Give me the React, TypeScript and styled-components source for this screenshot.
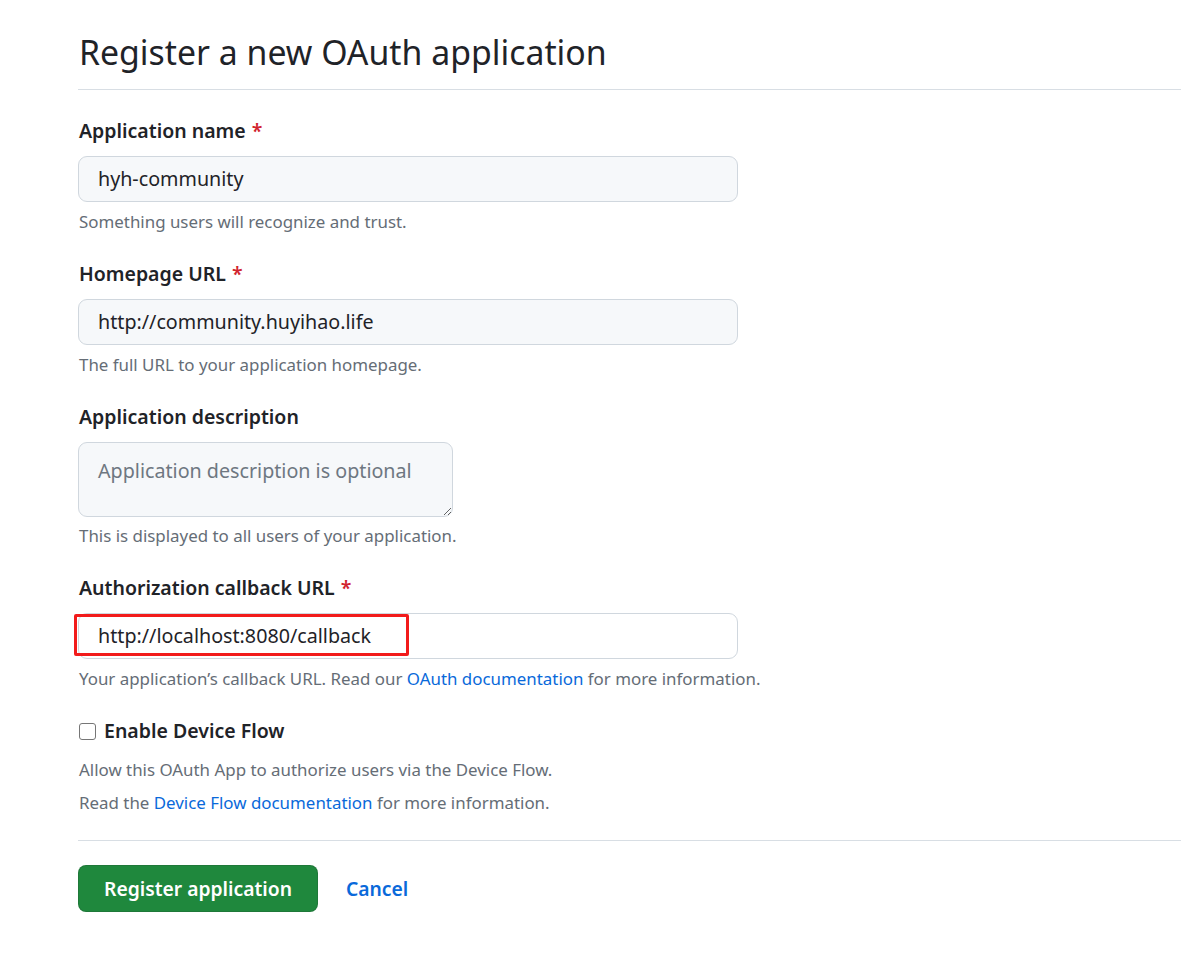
import React from "react";
import styled, { createGlobalStyle } from "styled-components";

const GlobalStyle = createGlobalStyle`
  html, body { margin: 0; padding: 0; background: #ffffff; }
  body {
    font-family: "Noto Sans", "Open Sans", "Liberation Sans", sans-serif;
    color: #1f2328;
  }
  * { box-sizing: border-box; }
`;

const Page = styled.main`
  padding: 28px 21px 40px 78px;
  width: 1202px;
`;

const Subhead = styled.header`
  border-bottom: 1px solid #d8dee4;
  padding-bottom: 13px;
  margin-bottom: 26px;
`;

const Title = styled.h2`
  margin: 0;
  font-size: 33.8px;
  line-height: 48px;
  font-weight: 400;
  color: #1f2328;
  padding-left: 1px;
`;

const Group = styled.div`
  margin-bottom: 25.5px;
`;

const Label = styled.label`
  display: block;
  font-size: 19.5px;
  line-height: 30px;
  font-weight: 600;
  color: #1f2328;
  margin-bottom: 9.5px;
  padding-left: 1px;
`;

const Required = styled.span`
  color: #d1242f;
  margin-left: 6px;
`;

const InputWrap = styled.div`
  position: relative;
  width: 660px;
`;

const Input = styled.input<{ $white?: boolean }>`
  display: block;
  width: 660px;
  height: 46px;
  padding: 0 19px;
  font-family: inherit;
  font-size: 19.7px;
  color: #1f2328;
  background: ${(p) => (p.$white ? "#ffffff" : "#f6f8fa")};
  border: 1px solid #d0d7de;
  border-radius: 9px;
  outline: none;
`;

const TextArea = styled.textarea`
  display: block;
  width: 375px;
  height: 75px;
  padding: 13px 19px;
  font-family: inherit;
  font-size: 19.7px;
  line-height: 30px;
  color: #1f2328;
  background: #f6f8fa;
  border: 1px solid #d0d7de;
  border-radius: 9px;
  outline: none;
  resize: both;
  &::placeholder { color: #6e7781; }
`;

const Annotation = styled.div`
  position: absolute;
  left: -4px;
  top: 1px;
  width: 335px;
  height: 42px;
  border: 3px solid #f21b1b;
  border-radius: 2px;
  pointer-events: none;
`;

const Hint = styled.p<{ $gap?: number }>`
  margin: ${(p) => p.$gap ?? 8}px 0 0;
  font-size: 16.9px;
  line-height: 24px;
  color: #656d76;
  padding-left: 1px;
`;

const Link = styled.a`
  color: #0969da;
  text-decoration: none;
`;

const CheckRow = styled.label`
  display: flex;
  align-items: center;
  gap: 8px;
  font-size: 19.5px;
  line-height: 30px;
  font-weight: 600;
  color: #1f2328;
  padding-left: 1px;
`;

const Check = styled.input`
  appearance: none;
  margin: 0;
  width: 17px;
  height: 17px;
  border: 1.5px solid #767676;
  border-radius: 3px;
  background: #ffffff;
`;

const Note = styled.p<{ $gap: number }>`
  margin: ${(p) => p.$gap}px 0 0;
  font-size: 16.9px;
  line-height: 24px;
  color: #656d76;
  padding-left: 1px;
`;

const Actions = styled.div`
  border-top: 1px solid #d8dee4;
  margin-top: 25px;
  padding-top: 24px;
  display: flex;
  align-items: center;
  gap: 28px;
`;

const Primary = styled.button`
  height: 47px;
  padding: 0 25px;
  background: #1f883d;
  color: #ffffff;
  border: 1px solid rgba(31, 35, 40, 0.15);
  border-radius: 8px;
  font-family: inherit;
  font-size: 19.3px;
  font-weight: 600;
`;

const CancelLink = styled.a`
  color: #0969da;
  font-size: 19.3px;
  font-weight: 600;
  text-decoration: none;
`;

export default function App() {
  return (
    <>
      <GlobalStyle />
      <Page>
        <Subhead>
          <Title>Register a new OAuth application</Title>
        </Subhead>

        <Group>
          <Label>
            Application name<Required>*</Required>
          </Label>
          <Input defaultValue="hyh-community" />
          <Hint>Something users will recognize and trust.</Hint>
        </Group>

        <Group>
          <Label>
            Homepage URL<Required>*</Required>
          </Label>
          <Input defaultValue="http://community.huyihao.life" />
          <Hint>The full URL to your application homepage.</Hint>
        </Group>

        <Group>
          <Label>Application description</Label>
          <TextArea placeholder="Application description is optional" />
          <Hint $gap={7}>This is displayed to all users of your application.</Hint>
        </Group>

        <Group>
          <Label>
            Authorization callback URL<Required>*</Required>
          </Label>
          <InputWrap>
            <Input $white defaultValue="http://localhost:8080/callback" />
            <Annotation />
          </InputWrap>
          <Hint>
            Your application’s callback URL. Read our{" "}
            <Link href="#">OAuth documentation</Link> for more information.
          </Hint>
        </Group>

        <div>
          <CheckRow>
            <Check type="checkbox" />
            Enable Device Flow
          </CheckRow>
          <Note $gap={12}>Allow this OAuth App to authorize users via the Device Flow.</Note>
          <Note $gap={9}>
            Read the <Link href="#">Device Flow documentation</Link> for more information.
          </Note>
        </div>

        <Actions>
          <Primary type="button">Register application</Primary>
          <CancelLink href="#">Cancel</CancelLink>
        </Actions>
      </Page>
    </>
  );
}
